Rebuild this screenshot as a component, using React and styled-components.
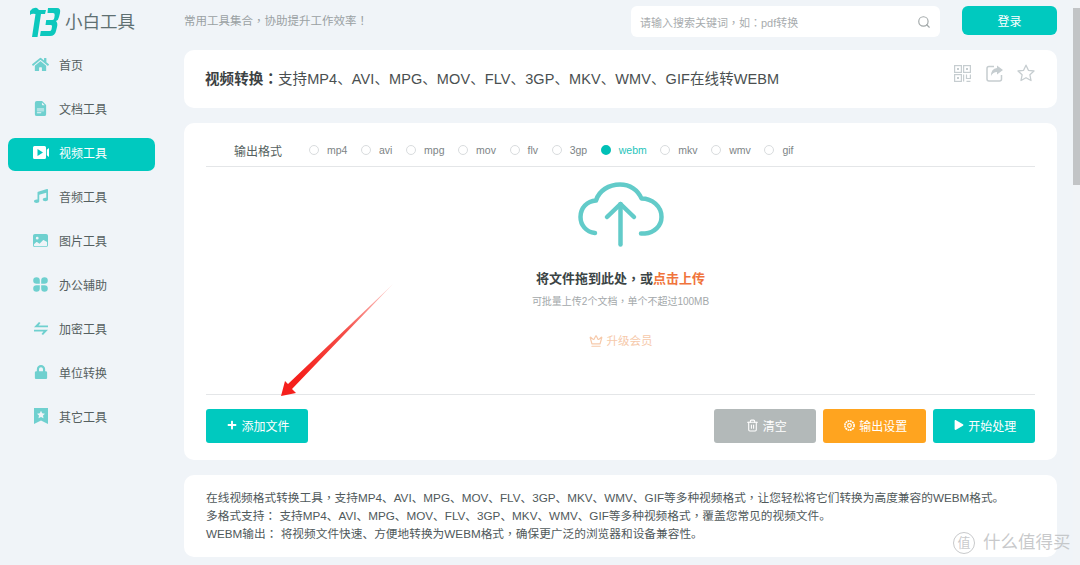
import React from "react";
import styled, { createGlobalStyle } from "styled-components";
import { FaHome, FaMusic, FaLock, FaPlay, FaPlus } from "react-icons/fa";
import { BsImageFill, BsFileEarmarkTextFill } from "react-icons/bs";
import { Search, Trash2, Crown } from "lucide-react";

const GlobalStyle = createGlobalStyle`
  html, body {
    margin: 0;
    padding: 0;
    background: #f0f4f8;
    font-family: "Liberation Sans", "Noto Sans CJK SC", sans-serif;
    overflow: hidden;
  }
  * { box-sizing: border-box; }
`;

const Page = styled.div`
  position: relative;
  width: 1080px;
  height: 565px;
  overflow: hidden;
  display: grid;
  grid-template-columns: 184px 873px;
`;

const Sidebar = styled.aside`
  padding-left: 8px;
`;

const LogoRow = styled.div`
  height: 50px;
  padding: 5px 0 0 22px;
  display: flex;
  align-items: flex-start;
  gap: 4px;
`;

const LogoText = styled.span`
  font-size: 17.5px;
  line-height: 35px;
  color: #5f7072;
`;

const NavList = styled.nav`
  display: flex;
  flex-direction: column;
  gap: 11px;
`;

const NavItem = styled.div`
  width: 147px;
  height: 33px;
  padding: 0 0 5px 24px;
  display: flex;
  align-items: center;
  gap: 10px;
  border-radius: 7px;
  font-size: 12px;
  color: ${(p) => (p.$active ? "#ffffff" : "#555f60")};
  background: ${(p) => (p.$active ? "#00c9bf" : "transparent")};
`;

const NavIcon = styled.span`
  width: 17px;
  height: 17px;
  display: flex;
  align-items: center;
  justify-content: center;
  color: ${(p) => (p.$active ? "#ffffff" : "#6fd0cf")};
`;

const Main = styled.main`
  display: flex;
  flex-direction: column;
  gap: 15px;
`;

const Header = styled.header`
  height: 35px;
  padding-top: 6px;
  display: flex;
  align-items: flex-start;
`;

const Tagline = styled.span`
  width: 447px;
  font-size: 11.5px;
  line-height: 30px;
  color: #9aa1a3;
`;

const SearchBox = styled.div`
  width: 309px;
  height: 31px;
  padding: 0 9px;
  display: flex;
  align-items: center;
  justify-content: space-between;
  background: #ffffff;
  border-radius: 6px;
  font-size: 11px;
  color: #a8acae;
  svg { color: #a2a8a9; }
`;

const LoginButton = styled.button`
  width: 95px;
  height: 29px;
  margin-left: 22px;
  border: 0;
  border-radius: 6px;
  background: #00c9bf;
  color: #ffffff;
  font: inherit;
  font-size: 12px;
`;

const Card = styled.section`
  background: #ffffff;
  border-radius: 10px;
`;

const TitleCard = styled(Card)`
  height: 58px;
  padding: 0 22px 0 21px;
  display: flex;
  align-items: center;
  justify-content: space-between;
`;

const Title = styled.h1`
  margin: 0;
  font-size: 14.5px;
  line-height: 20px;
  font-weight: 400;
  letter-spacing: 0.09px;
  color: #4a4f50;
  white-space: nowrap;
  b { color: #3c4142; font-weight: 700; }
`;

const TitleIcons = styled.div`
  display: flex;
  align-items: center;
  gap: 14.5px;
  margin-bottom: 12px;
  color: #c6cdd0;
`;

const ToolCard = styled(Card)`
  padding: 0 22px 17px;
`;

const FormatRow = styled.div`
  display: flex;
  align-items: center;
  height: 44px;
  padding: 18px 0 7px 28px;
  border-bottom: 1px solid #e4e6e8;
`;

const FormatLabel = styled.span`
  width: 75px;
  font-size: 12px;
  color: #555f60;
`;

const RadioGroup = styled.div`
  display: flex;
  align-items: center;
  gap: 13.6px;
`;

const RadioOption = styled.label`
  display: flex;
  align-items: center;
  gap: 8px;
  font-size: 10.5px;
  color: ${(p) => (p.$checked ? "#1fc4bb" : "#7d8486")};
`;

const RadioDot = styled.i`
  width: 10px;
  height: 10px;
  border-radius: 50%;
  border: ${(p) => (p.$checked ? "3px solid #00c0b6" : "1px solid #d9dcde")};
  background: ${(p) => (p.$checked ? "#00c0b6" : "#ffffff")};
`;

const DropArea = styled.div`
  height: 228px;
  padding-top: 15px;
  display: flex;
  flex-direction: column;
  align-items: center;
  border-bottom: 1px solid #e4e6e8;
`;

const DropTitle = styled.div`
  margin-top: 22px;
  font-size: 13px;
  line-height: 20px;
  font-weight: 700;
  color: #3b4445;
  em { font-style: normal; color: #f0743c; }
`;

const DropHint = styled.div`
  margin-top: 6px;
  font-size: 10px;
  line-height: 14px;
  color: #a3a8aa;
`;

const UpgradeLink = styled.div`
  margin-top: 24px;
  display: flex;
  align-items: center;
  gap: 4px;
  font-size: 11.5px;
  line-height: 16px;
  color: #f6c9aa;
`;

const Actions = styled.div`
  padding-top: 14px;
  display: flex;
  justify-content: space-between;
`;

const ActionGroup = styled.div`
  display: flex;
  gap: 7px;
`;

const ActionButton = styled.button`
  width: ${(p) => p.$width || "102.5px"};
  height: 34px;
  padding: 0 0 2px 3px;
  border: 0;
  border-radius: 3px;
  display: flex;
  align-items: center;
  justify-content: center;
  gap: 4px;
  background: ${(p) => p.$bg};
  color: #ffffff;
  font: inherit;
  font-size: 12px;
`;

const InfoCard = styled(Card)`
  height: 82px;
  padding: 14px 22px 0;
  font-size: 11.7px;
  line-height: 18px;
  color: #50595b;
  p { margin: 0; white-space: nowrap; }
`;

/* the source page's comma, colon and ! sit in the middle of the em box */
const Punct = styled.span`
  font-family: "Noto Sans CJK TC", sans-serif;
  line-height: 0;
`;

const Arrow = styled.svg`
  position: absolute;
  left: 270px;
  top: 275px;
`;

const ScrollTrack = styled.div`
  position: absolute;
  top: 0;
  right: 0;
  width: 7px;
  height: 565px;
  padding-top: 8px;
  background: #f1f4f7;
`;

const ScrollThumb = styled.div`
  height: 177px;
  background: #c2c4c6;
`;

const Watermark = styled.div`
  position: absolute;
  left: 953px;
  top: 530px;
  display: flex;
  align-items: center;
  gap: 8px;
  font-size: 17.5px;
  line-height: 25px;
  color: rgba(190, 192, 194, 0.85);
`;

const WatermarkBadge = styled.span`
  width: 22px;
  height: 22px;
  border: 1.5px solid rgba(190, 192, 194, 0.85);
  border-radius: 50%;
  font-size: 13px;
  line-height: 19px;
  text-align: center;
`;

const zh = (text) =>
  text.split(/([，：！])/).map((part, i) =>
    /[，：！]/.test(part) ? <Punct key={i}>{part}</Punct> : part
  );

const LogoMark = () => (
  <svg width="31" height="33" viewBox="0 0 31 33" fill="#0cc8bd">
    <path d="M0 6 Q3 2 7 3 L9 5 H16 L15 9 H11 L7.500 32 H2 L5.500 9 Q2 8 0 10 Z" />
    <path d="M18 3 H27 Q31 3 30 8 L29 12 Q28.500 15 26 16 Q28 18 27 22 L26 26 Q25 31 20 31 H10 L10.800 26 H19.500 Q21 26 21.500 24.500 L22 21.500 Q22.200 20 21 20 H15.500 L16.200 15 H22.500 Q24 15 24.300 13 L24.700 10 Q24.900 8 23 8 H17.500 Z" />
  </svg>
);

const VideoIcon = () => (
  <svg width="16" height="13" viewBox="0 0 16 13" fill="currentColor">
    <path fillRule="evenodd" d="M1.500 0 H11.500 Q13 0 13 1.500 V11.500 Q13 13 11.500 13 H1.500 Q0 13 0 11.500 V1.500 Q0 0 1.500 0 Z M4.500 3 V10 L10 6.500 Z" />
    <path d="M13.800 3.800 L16 2 V11 L13.800 9.200 Z" />
  </svg>
);

const PetalsIcon = () => (
  <svg width="15" height="15" viewBox="0 0 15 15" fill="currentColor">
    <path d="M3.500 0.200 a3.300 3.300 0 0 1 3.300 3.300 V6.800 H3.500 a3.300 3.300 0 0 1 0 -6.600 Z" />
    <path d="M11.500 0.200 a3.300 3.300 0 0 0 -3.300 3.300 V6.800 H11.500 a3.300 3.300 0 0 0 0 -6.600 Z" />
    <path d="M3.500 14.800 a3.300 3.300 0 0 0 3.300 -3.300 V8.200 H3.500 a3.300 3.300 0 0 0 0 6.600 Z" />
    <path d="M11.500 14.800 a3.300 3.300 0 0 1 -3.300 -3.300 V8.200 H11.500 a3.300 3.300 0 0 1 0 6.600 Z" />
  </svg>
);

const SwapIcon = () => (
  <svg width="16" height="13" viewBox="0 0 16 13" fill="currentColor">
    <path d="M6 0 L7.500 1 L5.500 3.500 H15 V5.300 H1 Z" />
    <path d="M10 13 L8.500 12 L10.500 9.500 H1 V7.700 H15 Z" />
  </svg>
);

const BookmarkStarIcon = () => (
  <svg width="14" height="16" viewBox="0 0 14 16">
    <path fill="currentColor" d="M0 0 H14 V16 L7 12.500 L0 16 Z" />
    <path fill="#f0f4f8" d="M7 2.800 L8.200 5.300 L11 5.700 L9 7.600 L9.500 10.300 L7 9 L4.500 10.300 L5 7.600 L3 5.700 L5.800 5.300 Z" />
  </svg>
);

const QrIcon = () => (
  <svg width="17" height="17" viewBox="0 0 17 17" fill="none" stroke="currentColor" strokeWidth="1.200">
    <rect x="0.600" y="0.600" width="6.800" height="6.800" />
    <rect x="9.600" y="0.600" width="6.800" height="6.800" />
    <rect x="0.600" y="9.600" width="6.800" height="6.800" />
    <rect x="3" y="3" width="2" height="2" fill="currentColor" stroke="none" />
    <rect x="12" y="3" width="2" height="2" fill="currentColor" stroke="none" />
    <rect x="3" y="12" width="2" height="2" fill="currentColor" stroke="none" />
    <path d="M9.600 9.500 V16.500 M12.500 9.500 V13.500 H16.400 V9.500 M12.500 16.400 H16.400" />
  </svg>
);

const ShareIcon = () => (
  <svg width="17" height="17" viewBox="0 0 17 17">
    <path fill="none" stroke="currentColor" strokeWidth="1.500" d="M8 1.500 H3 Q1 1.500 1 3.500 V14 Q1 16 3 16 H13.500 Q15.500 16 15.500 14 V10" />
    <path fill="currentColor" d="M11 0.500 L17 5 L11 9.500 V7 Q7 7 5 11 Q5 3.500 11 3 Z" />
  </svg>
);

const StarIcon = () => (
  <svg width="18" height="18" viewBox="0 0 18 18" fill="none" stroke="currentColor" strokeWidth="1.300" strokeLinejoin="round">
    <path d="M9 1.200 L11.400 6.300 L17 7 L12.900 10.800 L14 16.500 L9 13.700 L4 16.500 L5.100 10.800 L1 7 L6.600 6.300 Z" />
  </svg>
);

const CloudIcon = () => (
  <svg width="86" height="65" viewBox="0 0 86 65" fill="none" stroke="#62cbc9" strokeWidth="4.500" strokeLinecap="round" strokeLinejoin="round">
    <path d="M17 51 C8 50 2.500 43 2.500 35 C2.500 26 9 19 18 18.500 C21 8.500 31 2.500 42 2.500 C52 2.500 60 8 63.500 16.500 C74 16.500 83.500 24 83.500 35 C83.500 44 76 51 67 51.500 H63" />
    <path d="M42.500 62.500 V22" />
    <path d="M29 35 L42.500 22 L56 35" />
  </svg>
);

const GearDot = () => (
  <svg width="11" height="11" viewBox="0 0 11 11" fill="none" stroke="#ffffff">
    <circle cx="5.500" cy="5.500" r="4.600" strokeWidth="1.600" strokeDasharray="1.800 0.600" />
    <circle cx="5.500" cy="5.500" r="1.800" strokeWidth="1.200" />
  </svg>
);

const navItems = [
  { label: "首页", icon: <FaHome size={17} /> },
  { label: "文档工具", icon: <BsFileEarmarkTextFill size={15} /> },
  { label: "视频工具", icon: <VideoIcon />, active: true },
  { label: "音频工具", icon: <FaMusic size={14} /> },
  { label: "图片工具", icon: <BsImageFill size={15} /> },
  { label: "办公辅助", icon: <PetalsIcon /> },
  { label: "加密工具", icon: <SwapIcon /> },
  { label: "单位转换", icon: <FaLock size={14} /> },
  { label: "其它工具", icon: <BookmarkStarIcon /> },
];

const formats = ["mp4", "avi", "mpg", "mov", "flv", "3gp", "webm", "mkv", "wmv", "gif"];

export default function App() {
  return (
    <Page>
      <GlobalStyle />
      <Sidebar>
        <LogoRow>
          <LogoMark />
          <LogoText>小白工具</LogoText>
        </LogoRow>
        <NavList>
          {navItems.map((item) => (
            <NavItem key={item.label} $active={item.active}>
              <NavIcon $active={item.active}>{item.icon}</NavIcon>
              {item.label}
            </NavItem>
          ))}
        </NavList>
      </Sidebar>

      <Main>
        <Header>
          <Tagline>{zh("常用工具集合，协助提升工作效率！")}</Tagline>
          <SearchBox>
            <span>{zh("请输入搜索关键词，如：pdf转换")}</span>
            <Search size={14} />
          </SearchBox>
          <LoginButton>登录</LoginButton>
        </Header>

        <TitleCard>
          <Title>
            <b>{zh("视频转换：")}</b>支持MP4、AVI、MPG、MOV、FLV、3GP、MKV、WMV、GIF在线转WEBM
          </Title>
          <TitleIcons>
            <QrIcon />
            <ShareIcon />
            <StarIcon />
          </TitleIcons>
        </TitleCard>

        <ToolCard>
          <FormatRow>
            <FormatLabel>输出格式</FormatLabel>
            <RadioGroup>
              {formats.map((f) => (
                <RadioOption key={f} $checked={f === "webm"}>
                  <RadioDot $checked={f === "webm"} />
                  {f}
                </RadioOption>
              ))}
            </RadioGroup>
          </FormatRow>
          <DropArea>
            <CloudIcon />
            <DropTitle>
              {zh("将文件拖到此处，或")}<em>点击上传</em>
            </DropTitle>
            <DropHint>{zh("可批量上传2个文档，单个不超过100MB")}</DropHint>
            <UpgradeLink>
              <Crown size={14} />
              升级会员
            </UpgradeLink>
          </DropArea>
          <Actions>
            <ActionButton $bg="#00c9bf" $width="102px">
              <FaPlus size={10} />
              添加文件
            </ActionButton>
            <ActionGroup>
              <ActionButton $bg="#b3b9b9">
                <Trash2 size={13} />
                清空
              </ActionButton>
              <ActionButton $bg="#ffa41f">
                <GearDot />
                输出设置
              </ActionButton>
              <ActionButton $bg="#00c9bf">
                <FaPlay size={10} />
                开始处理
              </ActionButton>
            </ActionGroup>
          </Actions>
        </ToolCard>

        <InfoCard>
          <p>{zh("在线视频格式转换工具，支持MP4、AVI、MPG、MOV、FLV、3GP、MKV、WMV、GIF等多种视频格式，让您轻松将它们转换为高度兼容的WEBM格式。")}</p>
          <p>{zh("多格式支持： 支持MP4、AVI、MPG、MOV、FLV、3GP、MKV、WMV、GIF等多种视频格式，覆盖您常见的视频文件。")}</p>
          <p>{zh("WEBM输出： 将视频文件快速、方便地转换为WEBM格式，确保更广泛的浏览器和设备兼容性。")}</p>
        </InfoCard>
      </Main>

      <Arrow width="130" height="130" viewBox="270 275 130 130">
        <defs>
          <linearGradient id="arrowFade" gradientUnits="userSpaceOnUse" x1="393" y1="284" x2="300" y2="378">
            <stop offset="0" stopColor="#ffd9d6" />
            <stop offset="0.5" stopColor="#f5504a" />
            <stop offset="1" stopColor="#f5201c" />
          </linearGradient>
        </defs>
        <polygon fill="url(#arrowFade)" points="393,284 292,389 296,393 281,396 285,381 288,384" />
      </Arrow>

      <ScrollTrack>
        <ScrollThumb />
      </ScrollTrack>

      <Watermark>
        <WatermarkBadge>值</WatermarkBadge>
        什么值得买
      </Watermark>
    </Page>
  );
}
